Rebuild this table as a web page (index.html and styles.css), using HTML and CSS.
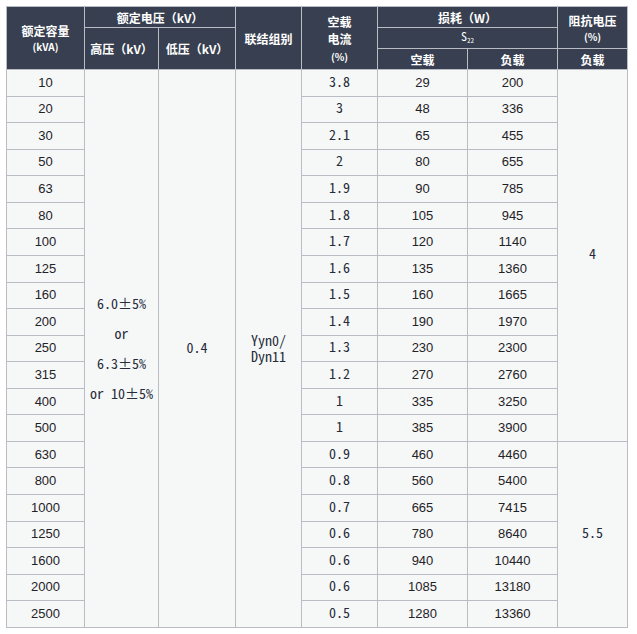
FILE: index.html
```html
<!DOCTYPE html>
<html lang="zh">
<head>
<meta charset="utf-8">
<title>变压器参数表</title>
<link rel="stylesheet" href="styles.css">
</head>
<body>
<table class="spec">
  <colgroup>
    <col class="c1"><col class="c2"><col class="c3"><col class="c4"><col class="c5"><col class="c6"><col class="c7"><col class="c8">
  </colgroup>
  <thead>
    <tr class="h1">
      <th rowspan="3">额定容量<br><span class="unit">(kVA)</span></th>
      <th colspan="2">额定电压（kV）</th>
      <th rowspan="3">联结组别</th>
      <th rowspan="3" class="stack">空载<br>电流<br><span class="unit">(%)</span></th>
      <th colspan="2">损耗（W）</th>
      <th rowspan="2">阻抗电压<br><span class="unit">(%)</span></th>
    </tr>
    <tr class="h2">
      <th rowspan="2">高压（kV）</th>
      <th rowspan="2">低压（kV）</th>
      <th colspan="2" class="sub">S<sub>22</sub></th>
    </tr>
    <tr class="h3">
      <th>空载</th>
      <th>负载</th>
      <th>负载</th>
    </tr>
  </thead>
  <tbody>
    <tr><td>10</td><td rowspan="21" class="mono tall">6.0±5%<br>or<br>6.3±5%<br>or 10±5%</td><td rowspan="21" class="mono one">0.4</td><td rowspan="21" class="mono group">Yyn0/<br>Dyn11</td><td class="mono cur">3.8</td><td>29</td><td>200</td><td rowspan="14" class="mono cur">4</td></tr>
    <tr><td>20</td><td class="mono cur">3</td><td>48</td><td>336</td></tr>
    <tr><td>30</td><td class="mono cur">2.1</td><td>65</td><td>455</td></tr>
    <tr><td>50</td><td class="mono cur">2</td><td>80</td><td>655</td></tr>
    <tr><td>63</td><td class="mono cur">1.9</td><td>90</td><td>785</td></tr>
    <tr><td>80</td><td class="mono cur">1.8</td><td>105</td><td>945</td></tr>
    <tr><td>100</td><td class="mono cur">1.7</td><td>120</td><td>1140</td></tr>
    <tr><td>125</td><td class="mono cur">1.6</td><td>135</td><td>1360</td></tr>
    <tr><td>160</td><td class="mono cur">1.5</td><td>160</td><td>1665</td></tr>
    <tr><td>200</td><td class="mono cur">1.4</td><td>190</td><td>1970</td></tr>
    <tr><td>250</td><td class="mono cur">1.3</td><td>230</td><td>2300</td></tr>
    <tr><td>315</td><td class="mono cur">1.2</td><td>270</td><td>2760</td></tr>
    <tr><td>400</td><td class="mono cur">1</td><td>335</td><td>3250</td></tr>
    <tr><td>500</td><td class="mono cur">1</td><td>385</td><td>3900</td></tr>
    <tr><td>630</td><td class="mono cur">0.9</td><td>460</td><td>4460</td><td rowspan="7" class="mono cur">5.5</td></tr>
    <tr><td>800</td><td class="mono cur">0.8</td><td>560</td><td>5400</td></tr>
    <tr><td>1000</td><td class="mono cur">0.7</td><td>665</td><td>7415</td></tr>
    <tr><td>1250</td><td class="mono cur">0.6</td><td>780</td><td>8640</td></tr>
    <tr><td>1600</td><td class="mono cur">0.6</td><td>940</td><td>10440</td></tr>
    <tr><td>2000</td><td class="mono cur">0.6</td><td>1085</td><td>13180</td></tr>
    <tr><td>2500</td><td class="mono cur">0.5</td><td>1280</td><td>13360</td></tr>
  </tbody>
</table>
</body>
</html>
```
FILE: styles.css
```css
html, body {
  margin: 0;
  padding: 0;
  background: #ffffff;
}
body {
  padding: 6px 0 0 6px;
}
.spec {
  border-collapse: collapse;
  table-layout: fixed;
  width: 621px;
  font-family: "Liberation Sans", "Noto Sans CJK SC", sans-serif;
  font-size: 13px;
  color: #1f2226;
}
.c1 { width: 78px; }
.c2 { width: 74px; }
.c3 { width: 77px; }
.c4 { width: 66px; }
.c5 { width: 76px; }
.c6 { width: 90px; }
.c7 { width: 90px; }
.c8 { width: 70px; }
.spec th,
.spec td {
  border: 1px solid #b9bdc3;
  padding: 0;
  text-align: center;
  vertical-align: middle;
}
.spec th {
  background: #373f50;
  color: #ffffff;
  font-family: "Noto Sans CJK SC", sans-serif;
  font-weight: 700;
  font-size: 12px;
  line-height: 15px;
}
.spec th.sub {
  font-family: "Noto Sans Mono CJK SC", "Noto Sans CJK SC", monospace;
  font-weight: 500;
}
.h1 { height: 21px; }
.h2 { height: 19px; }
.h3 { height: 21px; }
.unit {
  font-size: 10px;
  line-height: 13px;
}
.spec th.stack { line-height: 17px; }
.spec th.stack .unit { line-height: 12px; }
.spec th sub {
  font-size: 7px;
  vertical-align: -2px;
}
.spec tbody tr { height: 26.57px; }
.spec td {
  background: #f6f8f8;
  line-height: 16px;
}
.spec td.mono {
  font-family: "Noto Sans Mono CJK SC", "Noto Sans CJK SC", monospace;
  font-size: 14px;
  color: #252b38;
}
.spec td.cur { padding-bottom: 4px; }
.spec td.one { padding-bottom: 2px; }
.spec td.tall { line-height: 30px; }
.spec td.group { line-height: 16px; }
```
